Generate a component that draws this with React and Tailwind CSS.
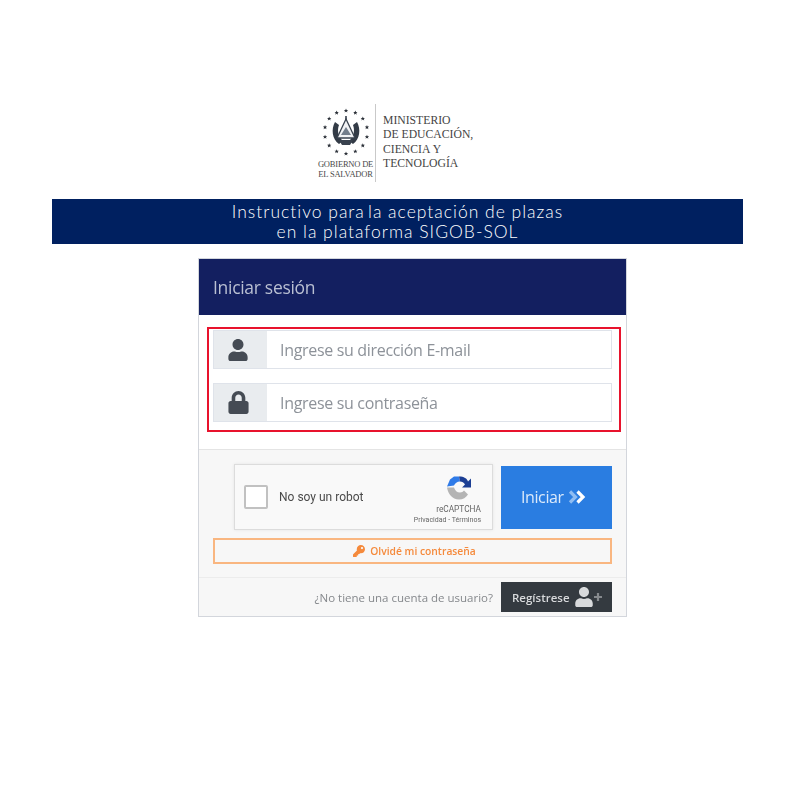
import React from 'react';
import { FaUser, FaLock, FaKey } from 'react-icons/fa';

const stars = Array.from({ length: 14 }, (_, i) => {
  const a = (i / 14) * Math.PI * 2;
  return { x: 25 + Math.sin(a) * 21.5, y: 25 - Math.cos(a) * 21.5 };
});

const Seal = () => (
  <svg width="50" height="50" viewBox="0 0 50 50" className="block">
    {stars.map((s, i) => (
      <polygon
        key={i}
        fill="#2b3038"
        transform={`translate(${s.x} ${s.y}) scale(1.25)`}
        points="0,-1.7 0.5,-0.5 1.7,-0.5 0.8,0.3 1.1,1.6 0,0.8 -1.1,1.6 -0.8,0.3 -1.7,-0.5 -0.5,-0.5"
      />
    ))}
    <path d="M14 15 C10 22 11 32 18 37 L22 34 C17 30 16 23 18 18 Z" fill="#333b46" />
    <path d="M36 15 C40 22 39 32 32 37 L28 34 C33 30 34 23 32 18 Z" fill="#333b46" />
    <path d="M25 12 L34 31 H16 Z" fill="#f1f2f4" stroke="#39424e" strokeWidth="1.3" />
    <path d="M20 28 L25 20 L30 28 Z" fill="#737e8b" />
    <path d="M18 33 H32 L29 38 H21 Z" fill="#39424e" />
    <path d="M25 9 v4" stroke="#39424e" strokeWidth="1.6" />
  </svg>
);

const RecaptchaLogo = () => (
  <svg width="24" height="25" viewBox="0 0 24 24" className="block">
    <path d="M7 1 L12 1 L13 6 C10 6 8 8 7 10 L0 11 L3 4 Z" fill="#2f7be8" />
    <path d="M12 1 C17 1 20 3 21 6 L24 3 V12 H15 L18 9 C17 7 15 6 13 6 Z" fill="#1c3f94" />
    <path d="M0 12 H7 C8 15 10 17 13 17 C15 17 16 16 17 15 L21 19 C19 22 16 24 12 24 C5 24 1 18 0 12 Z" fill="#b4b4b4" />
  </svg>
);

const DoubleChevron = () => (
  <svg width="18" height="14" viewBox="0 0 18 14" className="ml-[4px] block" fill="none" strokeWidth="3.2">
    <path d="M2 1.500 L7.500 7 L2 12.500" stroke="#8fbdf2" />
    <path d="M9.500 1.500 L15 7 L9.500 12.500" stroke="#fff" />
  </svg>
);

const PlusMark = () => (
  <svg width="8" height="8" viewBox="0 0 8 8" className="block" fill="none" stroke="#85898d" strokeWidth="2.2">
    <path d="M4 0 V8 M0 4 H8" />
  </svg>
);

const InputRow = ({ icon, placeholder }) => (
  <div className="flex h-[39px] border border-[#dfe3ea] bg-white">
    <div className="flex w-[53px] items-center justify-center bg-[#e9ecef] pr-[5px] text-[#454b54]">{icon}</div>
    <div className="flex items-center pl-[13px] text-[16px] tracking-[-0.32px] text-[#8d9299] font-['Open_Sans',sans-serif]">{placeholder}</div>
  </div>
);

export default function App() {
  return (
    <div className="flex h-[799px] w-[799px] flex-col items-start bg-white pt-[104px]">
      <div className="ml-[318px] flex h-[78px]">
        <div className="flex w-[55px] flex-col items-center pt-[3px]">
          <Seal />
          <div className="mt-[3px] whitespace-nowrap text-center font-['Liberation_Serif',serif] text-[8.5px] leading-[9.5px] tracking-[-0.2px] text-[#4a4a4a]">
            GOBIERNO DE
            <br />
            EL SALVADOR
          </div>
        </div>
        <div className="ml-[2px] w-px bg-[#c9c9c9]" />
        <div className="ml-[7px] pt-[10px] font-['Liberation_Serif',serif] text-[11.7px] leading-[14.4px] text-[#444]">
          MINISTERIO
          <br />
          DE EDUCACIÓN,
          <br />
          CIENCIA&#8201;Y
          <br />
          TECNOLOGÍA
        </div>
      </div>

      <div className="ml-[52px] mt-[17px] flex h-[45px] w-[691px] flex-col items-center justify-center bg-[#002060] font-['Lato',sans-serif] text-[17.5px] font-light leading-[20px] tracking-[1px] text-white">
        <div>Instructivo para&#8201;la aceptación de plazas</div>
        <div>en la plataforma SIGOB-SOL</div>
      </div>

      <div className="ml-[198px] mt-[14px] w-[429px] border border-[#d3d6dc] bg-white font-['Open_Sans',sans-serif] blur-[0.3px]">
        <div className="flex h-[56px] items-center bg-[#131f60] pl-[14px] text-[17.5px] tracking-[-0.3px] text-[#b9bfd2]">Iniciar sesión</div>

        <div className="h-[135px] border-b border-[#e4e4e4] pl-[8px] pt-[12px]">
          <div className="h-[105px] w-[414px] border-2 border-[#e8132d] pl-[4px] pt-[1px]">
            <div className="flex w-[399px] flex-col gap-[14px]">
              <InputRow icon={<FaUser size={22} />} placeholder="Ingrese su dirección E-mail" />
              <InputRow icon={<FaLock size={23} />} placeholder="Ingrese su contraseña" />
            </div>
          </div>
        </div>

        <div className="h-[128px] border-b border-[#ececec] bg-[#f7f7f7] pl-[14px] pt-[14px]">
          <div className="flex items-center gap-[8px] pl-[21px]">
            <div className="flex h-[66px] w-[259px] items-center border border-[#dcdcdc] bg-[#f9f9f9] pl-[9px] shadow-[0_0_3px_rgba(0,0,0,0.08)]">
              <div className="h-[24px] w-[24px] rounded-[2px] border-2 border-[#c1c1c1] bg-white" />
              <div className="ml-[11px] font-['Roboto',sans-serif] text-[12px] text-[#4a4a4a]">No soy un robot</div>
              <div className="ml-auto flex flex-col items-end pr-[11px] pt-[5px] font-['Roboto',sans-serif] text-[#666]">
                <div className="mr-[10px]">
                  <RecaptchaLogo />
                </div>
                <div className="mt-[4px] text-[8.3px] leading-[10px]">reCAPTCHA</div>
                <div className="mt-[1px] text-[7px] leading-[10px]">Privacidad - Términos</div>
              </div>
            </div>
            <div className="flex h-[63px] w-[111px] items-center bg-[#2a7de1] pl-[20px] text-[16px] tracking-[-0.4px] text-[#dbe9fa]">
              Iniciar
              <DoubleChevron />
            </div>
          </div>
          <div className="mt-[8px] flex h-[26px] w-[399px] items-center justify-center gap-[5px] border-2 border-[#f9b680] pl-[4px] text-[10.3px] font-semibold text-[#f58a3c]">
            <FaKey size={12} />
            <span className="pt-[1px]">Olvidé mi contraseña</span>
          </div>
        </div>

        <div className="flex h-[38px] items-center justify-end gap-[8px] bg-[#f7f7f7] pr-[14px] text-[11.5px] text-[#85888c]">
          <span className="pt-[2px]">¿No tiene una cuenta de usuario?</span>
          <div className="flex h-[30px] w-[111px] items-center bg-[#343a40] pl-[11px] text-[11.5px] font-semibold text-[#d8dadc]">
            <span className="pt-[2px]">Regístrese</span>
            <FaUser size={20} className="ml-[4px]" />
            <PlusMark />
          </div>
        </div>
      </div>
    </div>
  );
}
